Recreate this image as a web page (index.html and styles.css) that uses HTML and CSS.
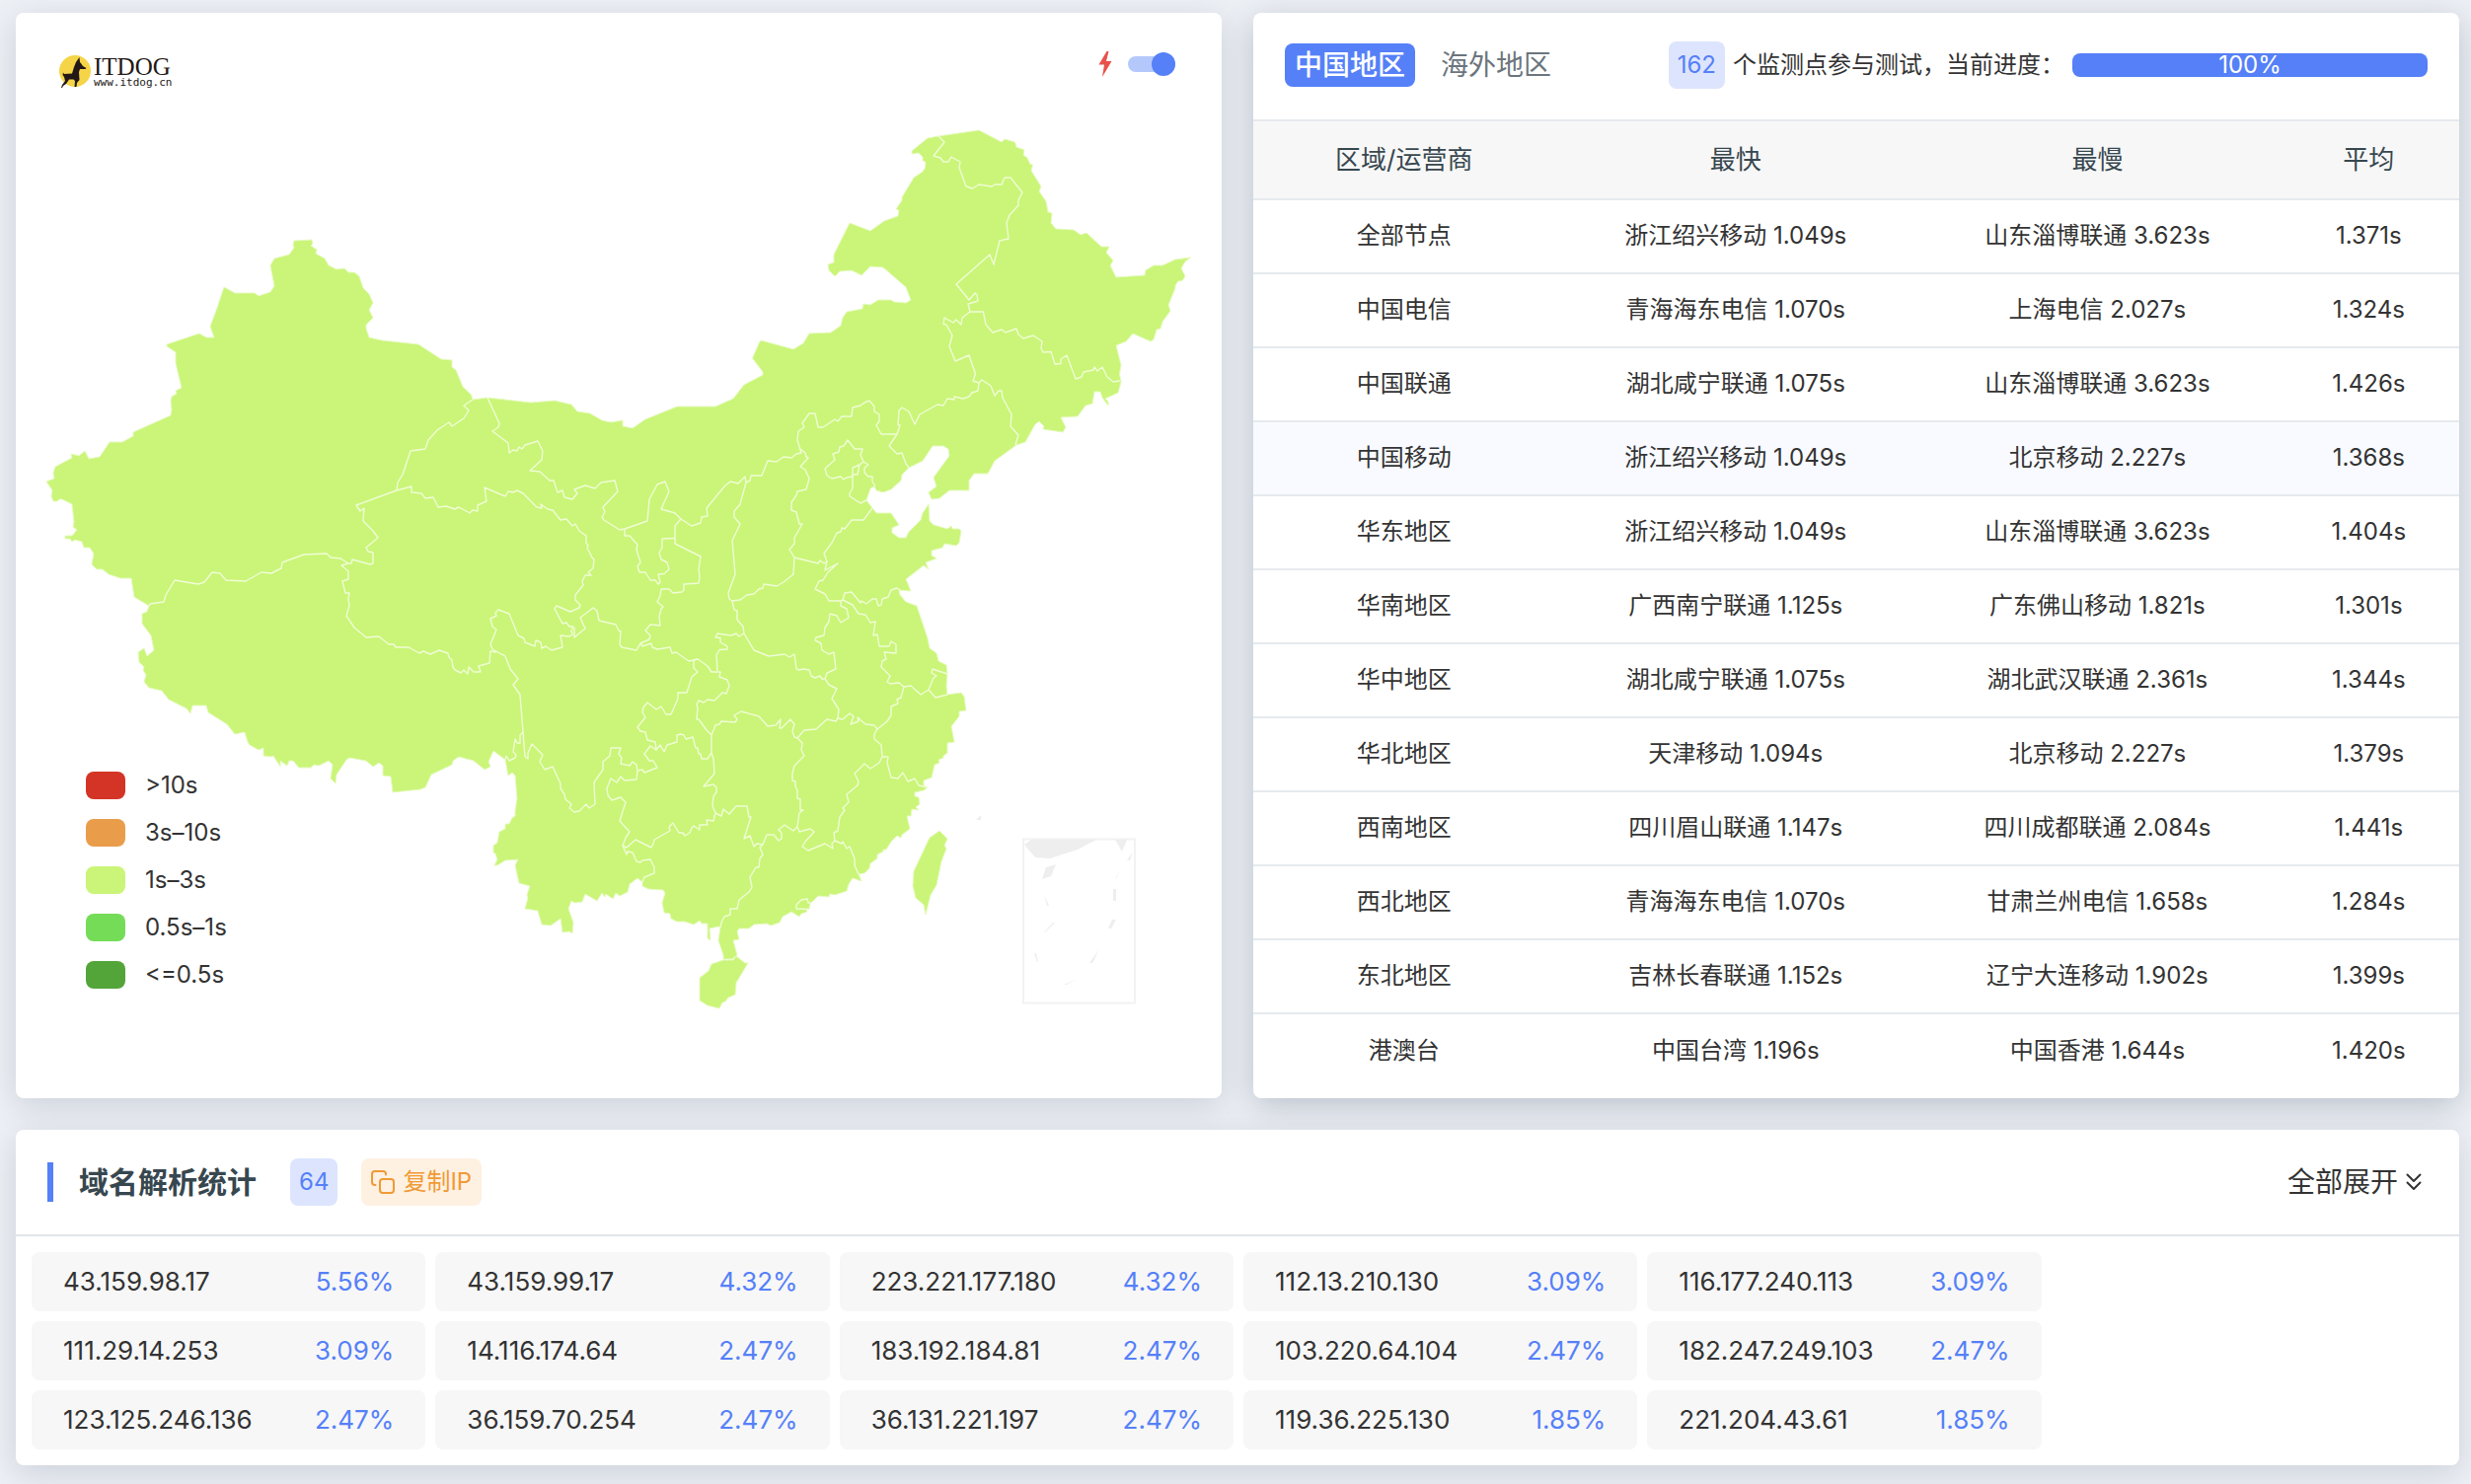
FILE: index.html
```html
<!DOCTYPE html>
<html lang="zh-CN">
<head>
    <meta charset="UTF-8">
    <meta name="viewport" content="width=device-width, initial-scale=1.0">
    <title>ITDOG</title>
    <link rel="stylesheet" href="styles.css">
</head>
<body>
    <main class="page">
        <div class="top">
            <section class="card map-card">
                <svg class="map" viewBox="16 13 1222 1100" role="img" aria-label="中国地图">
                    <!-- mainland -->
                    <path class="land" d="M479 405L477.500 400 469 392 462 375 458 372V365L447 364 424 349 387 345 374 342 371 333V329L378 322 374 314 378 307 374 298 368 292 364 280 359 276H353L349 272 341 273 333 269 329 262 320 257 321 253 315 249 317 247 316 243 298 244 297 248 298 251 293 258 278 262 274 269 278 290 274 296 262 300 258 297H238L227 291 220 312 213 331 217 342H209L202 338 169 349V351L178 357V368L184 393 178 396 179 399 174 402 173 407 174 415 173 421 135 438V442L124 448H111L101 463 90 465 86 457 80 462 72 460 73 464 56 473 54 479 55 485 47 488 53 497 52 503 54 508H58L60 506H63L73 511 75 529 74 534 78 537 73 543H66V546H71L73 549 76 547 83 549 85 555 91 555 95 561 93 572 98 577H104L110 582 122 586H133L136 605 151 614 149 620 144 622V632L153 644 156 659 149 665 146 657 140 661 141 671 146 676 145 679 148 684 146 691 151 697 164 700 171 709 189 718 193 723 195 715H209L211 722 230 734 238 744 248 742 251 752 253 755 262 760 267 758V766L275 767 277 766 284 777V771L291 776 293 771H297L303 778H315L318 775 323 776 333 771 337 775 335 789 340 794 341 785 351 770 354 768 371 771 378 777 384 773 388 776V786L396 787 398 803 426 800 431 798 437 785 458 775 459 771 465 767 480 771 491 780 497 777 495 772 500 761 512 770 515 786 519 783 522 786 524 809 522 822V827L519 829 516 835H512V840L506 843 504 854 500 857V864L502 865 504 871 501 877H504L512 872 525 871 522 877 526 895 537 898 534 907 535 910 532 921 545 923 549 937 558 938 568 931 570 945 577 944 580 946 581 935 576 921 579 913 582 915 590 914 593 906 605 913 610 905 613 909 614 906 621 911 624 905 628 908 636 904 638 896 646 890 651 894V898L657 901 672 902 674 905 671 915 673 925 679 926 680 931 686 934H694L703 937 709 933 711 936H717V951L720 953 719 941 728 939 730 940 728 953 733 968V972H742L747 968 743 953 749 952 747 944 749 941H759L764 937 777 936 781 938 790 935 793 929 802 924 810 929 812 926 818 924 817 922 820 921 821 916 829 908 840 909 841 906 846 907 858 903 860 896 864 890 873 893 870 886 876 885 881 880 882 875 889 870V866L895 863V861H898L903 853 909 847 913 849 914 846 922 840 919 827H923L924 820 931 821 928 818 932 815 931 808 927 807V803L936 801 940 798 936 796V791L944 788 947 775 952 773 951 770 956 768V766L960 763V753L967 752 964 736 972 726V721L979 720 977 706 974 702 960 704 959 695 960 683 959 674 951 670 949 662 942 657 940 647 929 614 918 610 912 603 911 598 923 599 918 587 936 573 941 577 938 570 949 566 944 563V558L955 555 957 551 969 553 972 550 974 538 972 536H965L964 533 960 536 946 532 942 528 941 511 935 520 933 527 921 539 918 545H911L904 540V535L911 532 903 520H888L878 507 882 495 886 493 888 497 895 499 903 496 913 487 914 481 921 474 935 467 945 452H956L961 455 962 462 946 484 949 493 941 499 944 506 952 505 962 497H982V487L987 480H1001L1008 467 1030 451 1039 448 1049 430 1053 427 1058 432 1057 435 1077 438 1080 433 1075 423 1092 422 1100 411 1107 409 1109 397H1115L1117 403 1123 411V407L1120 404 1133 398 1136 387 1134.500 379 1136 370 1131 350 1141 346 1148 338 1166 346 1169 344 1172 334 1176 333 1178 326 1186 315 1184 309 1191 292V289L1194 285 1198 284.500 1201 280 1197 272 1201 265 1206.500 261 1191 263 1178 269H1169L1161 274 1160 279 1131 281 1125 269 1128 264 1121 256 1124 250H1116L1101 236 1095 238 1088 233 1070 232 1065 226 1066 216 1062 215 1060 204 1053 194 1055 189 1045 173 1046.500 167 1044 166.500 1041 160 1037 157 1038 152 1030 149 1028.500 144 1018 141 1015 144 992 132 951 138 940 140 924 153V156L931 155 935 159V163L938 164 937.500 170 935 174 926 180 914 200V203L908 212 911 213 910 219 896 224 882 234 861 226 845 258V266L839 268 840 274 846 280 851 275 863 274 873 279 882 270 895 271 918 291 923 304 918 307 906 306 903 304H890L882 309 875 308 874 313 858 316 854 322 852 330 842 337 820 338 814 348 804 354 771 345 769 348 762.500 363 773 377V380L754 390 743 404 725 412H686L654 425 641 434 631 432V426L619 428 610 426 598 419 585 417 579 410 562 406 538 408 494 403Z"/>
                    <!-- Hainan, Taiwan -->
                    <path class="land" d="M721 977L733 973H743L746 969 755 976H758L746 996 745 1008 738 1011 735 1015 732 1016 729 1022 717 1019 709 1014V991L718 984Z"/>
                    <path class="land" d="M952 842L960 850 957 857 959 860 954 873 949 897 943 907 938 927 936 917 928 910 925 898 926 883 942 849Z"/>
                    <!-- province borders -->
                    <g class="border">
                        <path d="M479 405L470 411 475 416 470 424 458 432 455 428 443 436 434 446 431 455 416 457 408 481 403 489 402 497 361 512 365 518 369 515 368 528 378 538 383 545 371 555 373 559 378 560V571L375 572 357 567 356 571H353L345 566 335 565 331 561 308 562 286 570 285 576 275 581 265 580 249 589 229 588 223 581 215 580 207 590 201 592 177 588 174 593 168 603 166 610 152 612 151 614"/>
                        <path d="M402 497L417 493V499L427 500 431 505 439 504 444 514 452 513 461 516 465 514 476 520 479 517 484 518V512L493 508 491 494 512 503 515 498 520 499 524 497 530 500 544 514 549 515 548 511 555 516 560 517 568 527 574 526 580 533 583 531 587 538 594 543V550L596 553 595 555 600 565 602 567 601 576 596 580 599 583 593 583 590 589 591 593 583 603V608L588 613 587 616 578 620 564 614 562 617 570 632 574 631 577 635H581L579 639 580 643 577 645 568 644 570 656 559 659 553 655 549 657 548 651 543 649 542 655 532 651 531 647 525 644 516 622 505 618 502 621 503 624 497 627 499 635 503 638 497 653 499 658 512 665 517 678 525 688 520 694 527 704 530 742 532 767 535 769V763L539 754 550 765 547 772 552 780 560 777 568 794V799L572 805 573 810 579 815 577 819 582 823 587 822 594 815 597 819 603 815 602 793 611 780V772L618 766 619 758H629L627 764 630 768 629 774 638 776 641 772 645 775 646 781 645 790 633 791 629 787 625 793 619 789 615 799 616 806 620 811 629 808 634 813 628 832 638 843 634 849 631 857 635 866 636 863 641 864 645 873 649 874 651 872 659 871 663 879V885L653 889 651 894"/>
                        <path d="M353 571L346 573 353 579V587L347 589 350 601H354L353 607 354 614 351 624 359 636 371 646 384 645 394 653H399L401 656H414L425 662 429 660 436 663 445 659 454 662 455 666 458 669 459 676 461 679 467 682 470 679 474 683 475 676 480 681H487L485 675 496 672 497 660 503 661"/>
                        <path d="M530 742L527 745V753H524L522 749 520 762 523 765 522 768 516 771 513 766 512 770"/>
                        <path d="M494 403L506 429 505 433 499 437 515 449 516 459 520 456 524 457 526 453 529 455 532 451 545 447 550 457 549 466 537 477 547 478 557 487H561L565 499 570 497 572 504 580 506 585 500 582 496 593 492 603 495 609 489 623 487 626 498 611 514 613 519 610 524 612 527 628 537 633 536 656 528 658 506 666 491 674 488 678 498 670 516 684 520 690 526 701 533 710 530 711 524 717 523 716 515 734 493 740 488 748 490 755 483 756 489 760 487 761 482H772L778 467 787 468 794 463 802 464 807 460 812 459 808 446 809 437 815 433 813 429 820 419H826L829 433H834L846 425 849 427 853 422H863L864 413 872 411 876 408 881 406 886 412V417L891 420V427L888 431 893 440H909L912 431 910 430.500 911 416 914 413 921 417 927 430 932 420 950 410 956 411 960 404 967 405V402L976 404 982 402 985 398 991 396 992 388 986 386 988.500 379 982 360 968 366 962 351 965 340 959 329 956 328.500 957 322 966 327 969 324 974 329 975 322 983 316 981 308 991 305 990 299 988 297 982 304 969 288 1003 258 1007 268 1013 244 1022 242 1020 226 1023 218 1032 208V203L1036 195 1024 180H1018L1015 187H1008L1005 189 992 187 985.500 191 979 189 972 170 973 164 964 159 961 164H956L953 160 946 158 957 144 951 138"/>
                        <path d="M983 316H996.500L999 329 1006 337 1015 334 1019 337 1030 333 1032 339 1037 343 1047 340 1056 346 1055 353 1057 357 1065 356.500 1069 369 1075 368.500V364L1081 360 1090 384 1096 382 1098 377 1108 375 1109 372 1112 376 1117 372 1122 382 1128 387 1135 386"/>
                        <path d="M992 388L995 385 1004 391 1008 401 1012 396H1015L1016 403 1025 420 1024 432 1032 441 1029 451"/>
                        <path d="M909 440L901 452 909 460 914 459 918 470 921 474"/>
                        <path d="M811 455L816 459 817 463 819 464 811 473 816 476 820 485 817 496 808 498 807 502 802 509V517L807 519 810 531H813L805 545V551L800 557 805 565 804 582 794 590 787 594 774 592 773 596 769 597 764 602 757 603 750 608 742 609 739 607 738 601 745 582 742 548 750 531 744 524V518L750 511 756 489"/>
                        <path d="M742 609L744 618 747 619V628L753 635 754 642 764 659 779 665 795 663 800 666 805 663 807 678 810 679 814 678 820 679 822 685 826 687 831 685 833 688H836L838 682 847 678 845 661 840 663 833 659 832 652 826 649 827 646 835 644 836 636 840 630 841 622 848 624 852 631 860 626 858 617 852 614V609"/>
                        <path d="M805 565L829 571 831 568 835 571 838 569 836 578 849 571 839 580 834 588 830 589 826 597 836 602 840 609H852L854 608 856 601 863 600 872 611 873 609 878 612 884 607 888 607 890 614 893 613 894 607 900 605 903 598 909 596 912 598"/>
                        <path d="M884 515L875 527H863L856 536 853 535 852 539 848 540 843 550 835 561 838 569"/>
                        <path d="M854 608L864 613 870 622 877 623 882 631 887 630 885 644 889 643 891 655H901L903 650 908 653V662L896 661 898 668 894 670 893 676 902 685 899 691 902 693 911 692 916 696 923 695 933 704 941 699 948 707 960 704M941 699L946 687 949 685 944 682 945 678 960 683"/>
                        <path d="M916 696L913 707 909 709 910 713 903 716V725L899 731 889 739 886 735 877 734 869 727 870 731 862 734 865 726 861 723 854 729 849 728 847 731 838 729 827 739 815 740 808 748"/>
                        <path d="M836 688L840 694 848 698 843 708 850 719 849 728"/>
                        <path d="M889 739L886 744V749L893 755 894 767 891 773 882 779 876 774 866 784 870 792 869 796 858 805 860 813 854 819 856 821 851 828 849 842 845 844 846 852 843 855 844 860 836 855 819 862 813 858 816 853 825 843 821 840 810 843 808 838"/>
                        <path d="M894 767H900L899 773 903 788 910 789 915 783 920 792 927 789 931 796 940 798"/>
                        <path d="M846 852L853 855 854 853 858 860 861 858 866 870V877L870 886"/>
                        <path d="M808 748L813 753 812 760 815 766 805 776 803 784V791L806 792V797L808 801V809L811 810V821H814L810 824 808 838"/>
                        <path d="M808 748L805 747 803 741 805 734 801 729 792 738H790L791 729 786 735 778 736 769 726 751 721 744 725 747 729 745 732 731 731 729 734 725 735 721 745 716 740 708 729H706L707 718 706 714 708 710 713 712 717 709 724 710 732 702 736 703 739 695 737 689 729 686 730 681H721L717 675 707 668 703 669V677L707 681 701 686 696 702H687V708L680 724H675L670 716 665 719 656 712 652 717 651 722 654 727 646 737 649 741 654 742 656 750 664 752 665 760 669 755 673 762 676 755 686 752V745L690 744 693 745 695 749 702 747 705 758H707L708 764H710L711 769H717L721 763V745"/>
                        <path d="M665 760L659 756 653 764 658 771H662L666 778 653 783 651 780 646 781"/>
                        <path d="M721 763L723 769 724 784 713 797 723 795 726 798V803L723 807 722 817 725 824 723 832 716 831 717 836H709V841L703 837 701 839 699 844 694 847 692 844H688L682 834 678 838 679 842 663 851 662 855 660 859 644 851 635 859 631 857"/>
                        <path d="M725 824L731 827 733 820 739 825 746 817H757L759 828H761L754 850 760 847 764 858 767 855 773 856 777 846H784L789 852 792 850V844L789 841 795 836 804 842 808 838"/>
                        <path d="M773 856L770 859 773 866 770 870 769 879H766L760 889 762 899 759 904 749 912 747 921H740V927L734 929 731 935 730 940"/>
                        <path d="M633 536V543H638L646 552 645 557 649 570 646 574 648 580H654L659 588H664L667 592 669 590 667 582 673 581.500 678 577 676 570 670 567 668 560 671 555V546L684 545.500"/>
                        <path d="M690 526L684 533V551L710 564 708 577 709 584 708 591 693 592V598L691 600 682 601 678 597H670L669 604 666 610 672 615 670 617 668 625 669 634 659 633 654 639 659 644 658 648 649 652 651 655 660 652 661 656 666 658 679 656 681 662 685 661 698 670 707 668"/>
                        <path d="M649 652L645 659 630 656 628 653 629 640 627 639 624 633 607 629 605 619 601 616 588 626 593 637 582 646V636"/>
                        <path d="M754 642L749 645 746 642 741 644 727 642 725 646 730 646.500V651L737 655V658L729 658.500 726 664 727 680"/>
                        <path d="M859 446L866 455H874L872 461 875 468 871 471 864 474V483L858 484 855 486 852 483 843 485 838 482 836 475 846 466 844 460 850 458 851 453 855 452ZM875 468L880 471 876 474V479L880 483H884V488L887 493M864 483V495L861 500V503L872 510 878 507M871 471L869 481H864"/>
                        <path d="M822 915H819L818 911 812 912 807 917V921L819 921.500"/>
                    </g>
                    <!-- South China Sea inset -->
                    <rect class="inset" x="1037" y="850.500" width="113" height="166"/>
                    <path class="isle" d="M1038 856L1045 851H1111L1092 861 1064 870 1049 869ZM1130 851H1142L1137 863ZM1060 879L1070 876 1065 888 1056 891ZM989 831L994 826V831ZM1148 863L1145 872H1142ZM1136 881L1131 890H1130ZM1128 901H1131V913H1128ZM1127 932H1131L1126 941H1123ZM1114 962L1107 976H1104ZM1090 993L1081 998H1078ZM1048 966H1050L1052 975H1051ZM1067 935H1069L1059 945H1058ZM1058 907L1063 918H1061Z"/>
                </svg>

                <div class="logo">
                    <svg class="logo-mark" viewBox="0 0 32 34" aria-hidden="true">
                        <circle cx="16" cy="16" r="16" fill="#f5d547"/>
                        <path fill="#231815" d="M20.500 2L21 7C22 8 23 9.500 24 11L27.500 13 26.500 14 21 14 20 17 20.500 25 18 28 17.500 32H15.500L16 26 14.500 24.500H10L7 29 4 31 3 33 2 33 3 30 6 26 5 22 3.500 20 4 17.500 5 19 13 18.500 15 12 17 7Z"/>
                    </svg>
                    <div class="logo-text">
                        <span class="logo-name">ITDOG</span>
                        <span class="logo-url">www.itdog.cn</span>
                    </div>
                </div>

                <label class="speed">
                    <svg class="bolt" viewBox="0 0 14 26" aria-hidden="true">
                        <path fill="#e8524a" d="M8.500 0L0.500 13.500H6L4 26 13.500 10H8L10.500 0Z"/>
                    </svg>
                    <input class="switch" type="checkbox" aria-label="快速模式" checked>
                </label>

                <ul class="legend">
                    <li><i class="swatch red"></i>&gt;10s</li>
                    <li><i class="swatch orange"></i>3s–10s</li>
                    <li><i class="swatch lime"></i>1s–3s</li>
                    <li><i class="swatch green"></i>0.5s–1s</li>
                    <li><i class="swatch dark"></i>&lt;=0.5s</li>
                </ul>
            </section>

            <section class="card stat-card">
                <div class="stat-head">
                    <div class="tabs">
                        <button class="tab active" type="button">中国地区</button>
                        <button class="tab" type="button">海外地区</button>
                    </div>
                    <div class="progress-info">
                        <span class="badge">162</span>
                        <span>个监测点参与测试，当前进度：</span>
                        <div class="progress" role="progressbar" aria-valuenow="100">
                            <div class="progress-bar" style="width: 100%">100%</div>
                        </div>
                    </div>
                </div>
                <table class="stat-table">
                    <thead>
                        <tr><th class="col-area">区域/运营商</th><th class="col-fast">最快</th><th class="col-slow">最慢</th><th class="col-avg">平均</th></tr>
                    </thead>
                    <tbody>
                        <tr><td>全部节点</td><td>浙江绍兴移动 1.049s</td><td>山东淄博联通 3.623s</td><td>1.371s</td></tr>
                        <tr><td>中国电信</td><td>青海海东电信 1.070s</td><td>上海电信 2.027s</td><td>1.324s</td></tr>
                        <tr><td>中国联通</td><td>湖北咸宁联通 1.075s</td><td>山东淄博联通 3.623s</td><td>1.426s</td></tr>
                        <tr class="current"><td>中国移动</td><td>浙江绍兴移动 1.049s</td><td>北京移动 2.227s</td><td>1.368s</td></tr>
                        <tr><td>华东地区</td><td>浙江绍兴移动 1.049s</td><td>山东淄博联通 3.623s</td><td>1.404s</td></tr>
                        <tr><td>华南地区</td><td>广西南宁联通 1.125s</td><td>广东佛山移动 1.821s</td><td>1.301s</td></tr>
                        <tr><td>华中地区</td><td>湖北咸宁联通 1.075s</td><td>湖北武汉联通 2.361s</td><td>1.344s</td></tr>
                        <tr><td>华北地区</td><td>天津移动 1.094s</td><td>北京移动 2.227s</td><td>1.379s</td></tr>
                        <tr><td>西南地区</td><td>四川眉山联通 1.147s</td><td>四川成都联通 2.084s</td><td>1.441s</td></tr>
                        <tr><td>西北地区</td><td>青海海东电信 1.070s</td><td>甘肃兰州电信 1.658s</td><td>1.284s</td></tr>
                        <tr><td>东北地区</td><td>吉林长春联通 1.152s</td><td>辽宁大连移动 1.902s</td><td>1.399s</td></tr>
                        <tr><td>港澳台</td><td>中国台湾 1.196s</td><td>中国香港 1.644s</td><td>1.420s</td></tr>
                    </tbody>
                </table>
            </section>
        </div>

        <section class="card dns-card">
            <div class="dns-head">
                <h2 class="dns-title">域名解析统计</h2>
                <span class="badge">64</span>
                <button class="copy" type="button">
                    <svg class="copy-icon" viewBox="0 0 24 24" fill="none" stroke="currentColor" stroke-width="2" stroke-linecap="round" stroke-linejoin="round" aria-hidden="true">
                        <rect x="9" y="9" width="14" height="14" rx="3"/>
                        <path d="M4.500 15H4a3 3 0 0 1-3-3V4a3 3 0 0 1 3-3h8a3 3 0 0 1 3 3v0.500"/>
                    </svg>
                    复制IP
                </button>
                <button class="expand" type="button">
                    全部展开
                    <svg class="expand-icon" viewBox="0 0 16 18" fill="none" stroke="currentColor" stroke-width="2" stroke-linecap="round" stroke-linejoin="round" aria-hidden="true">
                        <path d="M1.500 1.500L8 8l6.500-6.500M1.500 9.500L8 16l6.500-6.500"/>
                    </svg>
                </button>
            </div>
            <ul class="ip-list">
                <li><span>43.159.98.17</span><b>5.56%</b></li>
                <li><span>43.159.99.17</span><b>4.32%</b></li>
                <li><span>223.221.177.180</span><b>4.32%</b></li>
                <li><span>112.13.210.130</span><b>3.09%</b></li>
                <li><span>116.177.240.113</span><b>3.09%</b></li>
                <li class="first"><span>111.29.14.253</span><b>3.09%</b></li>
                <li><span>14.116.174.64</span><b>2.47%</b></li>
                <li><span>183.192.184.81</span><b>2.47%</b></li>
                <li><span>103.220.64.104</span><b>2.47%</b></li>
                <li><span>182.247.249.103</span><b>2.47%</b></li>
                <li class="first"><span>123.125.246.136</span><b>2.47%</b></li>
                <li><span>36.159.70.254</span><b>2.47%</b></li>
                <li><span>36.131.221.197</span><b>2.47%</b></li>
                <li><span>119.36.225.130</span><b>1.85%</b></li>
                <li><span>221.204.43.61</span><b>1.85%</b></li>
            </ul>
        </section>
    </main>
</body>
</html>
```
FILE: styles.css
```css
* {
    box-sizing: border-box;
}

body {
    margin: 0;
    background-color: #edf0f5;
    color: #333;
    font-family: Inter, "Noto Sans CJK SC", sans-serif;
    font-size: 24px;
    line-height: 36px;
}

button {
    border: 0;
    padding: 0;
    background: none;
    color: inherit;
    font: inherit;
    cursor: pointer;
}

.page {
    display: flex;
    flex-direction: column;
    gap: 32px;
    padding: 13px 12px 19px 16px;
}

.top {
    display: grid;
    grid-template-columns: 1fr 1fr;
    gap: 32px;
}

.card {
    position: relative;
    background-color: #fff;
    border-radius: 8px;
    box-shadow: 0 8px 32px rgba(70, 85, 110, 0.2);
}

/* map */
.map {
    display: block;
    width: 100%;
}

.land {
    fill: #caf578;
    stroke: #e6fabf;
    stroke-width: 1;
}

.border {
    fill: none;
    stroke: #f0fcd6;
    stroke-width: 1.4;
    stroke-linejoin: round;
}

.inset {
    fill: none;
    stroke: #f2f2f2;
    stroke-width: 2;
}

.isle {
    fill: #eee;
}

.logo {
    position: absolute;
    top: 43px;
    left: 44px;
    display: flex;
    gap: 3px;
}

.logo-mark {
    width: 32px;
    height: 34px;
}

.logo-text {
    display: flex;
    flex-direction: column;
    color: #231815;
}

.logo-name {
    font-family: "Liberation Serif", serif;
    font-size: 25px;
    line-height: 24px;
}

.logo-url {
    font-family: "DejaVu Sans Mono", monospace;
    font-size: 11px;
    line-height: 8px;
}

.speed {
    position: absolute;
    top: 39px;
    right: 47px;
    display: flex;
    align-items: center;
    gap: 16px;
}

.bolt {
    width: 14px;
    height: 26px;
}

.switch {
    position: relative;
    width: 48px;
    height: 16px;
    margin: 0;
    border-radius: 8px;
    background-color: #b5c8fc;
    appearance: none;
}

.switch::after {
    content: '';
    position: absolute;
    top: -4px;
    right: 0;
    width: 24px;
    height: 24px;
    border-radius: 50%;
    background-color: #5580f8;
}

.legend {
    position: absolute;
    left: 71px;
    bottom: 107px;
    display: flex;
    flex-direction: column;
    gap: 12px;
    margin: 0;
    padding: 0;
    list-style: none;
}

.legend li {
    display: flex;
    align-items: center;
    gap: 20px;
}

.swatch {
    width: 40px;
    height: 28px;
    border-radius: 8px;
}

.red { background-color: #d43426; }
.orange { background-color: #e99d4b; }
.lime { background-color: #caf578; }
.green { background-color: #75dc58; }
.dark { background-color: #53a53a; }

/* region table */
.stat-card {
    box-shadow: 0 8px 32px rgba(70, 85, 110, 0.3);
}

.stat-head {
    display: flex;
    align-items: center;
    justify-content: space-between;
    height: 110px;
    padding: 0 32px 2px;
    border-bottom: 2px solid #e6eaee;
}

.tabs {
    display: flex;
    gap: 16px;
}

.tab {
    height: 44px;
    padding: 0 10px;
    border-radius: 8px;
    color: #6c757d;
    font-size: 28px;
    line-height: 44px;
}

.tab.active {
    background-color: #5580f8;
    color: #fff;
    font-weight: 500;
}

.progress-info {
    display: flex;
    align-items: center;
    gap: 8px;
}

.badge {
    height: 48px;
    padding: 0 9px;
    border-radius: 8px;
    background-color: #dde5fe;
    color: #5580f8;
    line-height: 48px;
}

.progress {
    width: 360px;
    border-radius: 8px;
    background-color: #e9ecef;
}

.progress-bar {
    border-radius: 8px;
    background-color: #5580f8;
    color: #fff;
    line-height: 24px;
    text-align: center;
}

.stat-table {
    width: 100%;
    border-spacing: 0;
    table-layout: fixed;
    text-align: center;
}

.stat-table th {
    height: 80px;
    padding: 0;
    border-bottom: 2px solid #e6eaee;
    background-color: #f7f7f7;
    color: #37474f;
    font-size: 26px;
    font-weight: 400;
}

.stat-table td {
    height: 75px;
    padding: 0 0 2px;
    border-bottom: 2px solid #e6eaee;
}

.stat-table tr:last-child td {
    border-bottom: 0;
}

.current td {
    background-color: #f8faff;
}

.stat-table .col-area { width: 25%; }
.stat-table .col-fast { width: 30%; }
.stat-table .col-slow { width: 30%; }
.stat-table .col-avg { width: 15%; }

/* dns result */
.dns-head {
    display: flex;
    align-items: center;
    height: 108px;
    padding: 0 38px 0 32px;
    border-bottom: 2px solid #e1e4ea;
}

.dns-title {
    margin: 0 34px 0 0;
    padding-left: 26px;
    border-left: 6px solid #5580f8;
    color: #37474f;
    font-size: 30px;
    font-weight: 600;
    line-height: 40px;
}

.copy {
    display: flex;
    align-items: center;
    gap: 8px;
    height: 48px;
    margin-left: 24px;
    padding: 0 10px;
    border-radius: 8px;
    background-color: #fef1e2;
    color: #f09a36;
}

.copy-icon {
    width: 24px;
    height: 24px;
}

.expand {
    display: flex;
    align-items: center;
    gap: 8px;
    margin-left: auto;
    font-size: 28px;
}

.expand-icon {
    width: 16px;
    height: 18px;
}

.ip-list {
    display: grid;
    grid-template-columns: repeat(6, 1fr);
    gap: 10px;
    margin: 0;
    padding: 16px 14px 16px 16px;
    list-style: none;
}

.ip-list li {
    display: flex;
    align-items: center;
    justify-content: space-between;
    height: 60px;
    padding: 0 32px;
    border-radius: 8px;
    background-color: #f7f7f7;
    font-size: 26px;
}

.ip-list .first {
    grid-column-start: 1;
}

.ip-list b {
    color: #5580f8;
    font-weight: 400;
}
```
